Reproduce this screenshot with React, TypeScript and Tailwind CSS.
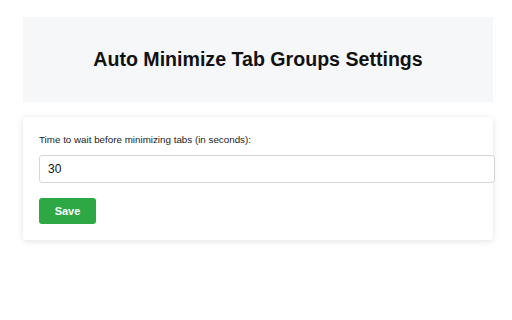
export default function App() {
  return (
    <div className="w-[512px] h-[320px] bg-white pt-[17px] pl-[23px]" style={{ fontFamily: '"Liberation Sans", Arial, sans-serif' }}>
      <div className="w-[470px] h-[85px] bg-[#f6f7f8] flex items-center justify-center">
        <h1 className="text-[19.6px] font-bold text-[#111]">Auto Minimize Tab Groups Settings</h1>
      </div>
      <div className="mt-[15px] w-[470px] h-[123px] bg-white rounded-[3px] shadow-[0_1px_6px_rgba(0,0,0,0.12)] px-4 pt-[17px]">
        <div className="text-[9.8px] leading-[12px] text-[#222]">Time to wait before minimizing tabs (in seconds):</div>
        <div className="mt-[9px] w-[456px] h-[28px] border border-[#d6d6d6] rounded-[3px] bg-white flex items-center px-2 text-[12px] text-[#111]">30</div>
        <button className="mt-[15px] w-[57px] h-[26px] rounded-[3px] bg-[#2ea845] text-white text-[11px] font-bold flex items-center justify-center">Save</button>
      </div>
    </div>
  );
}
